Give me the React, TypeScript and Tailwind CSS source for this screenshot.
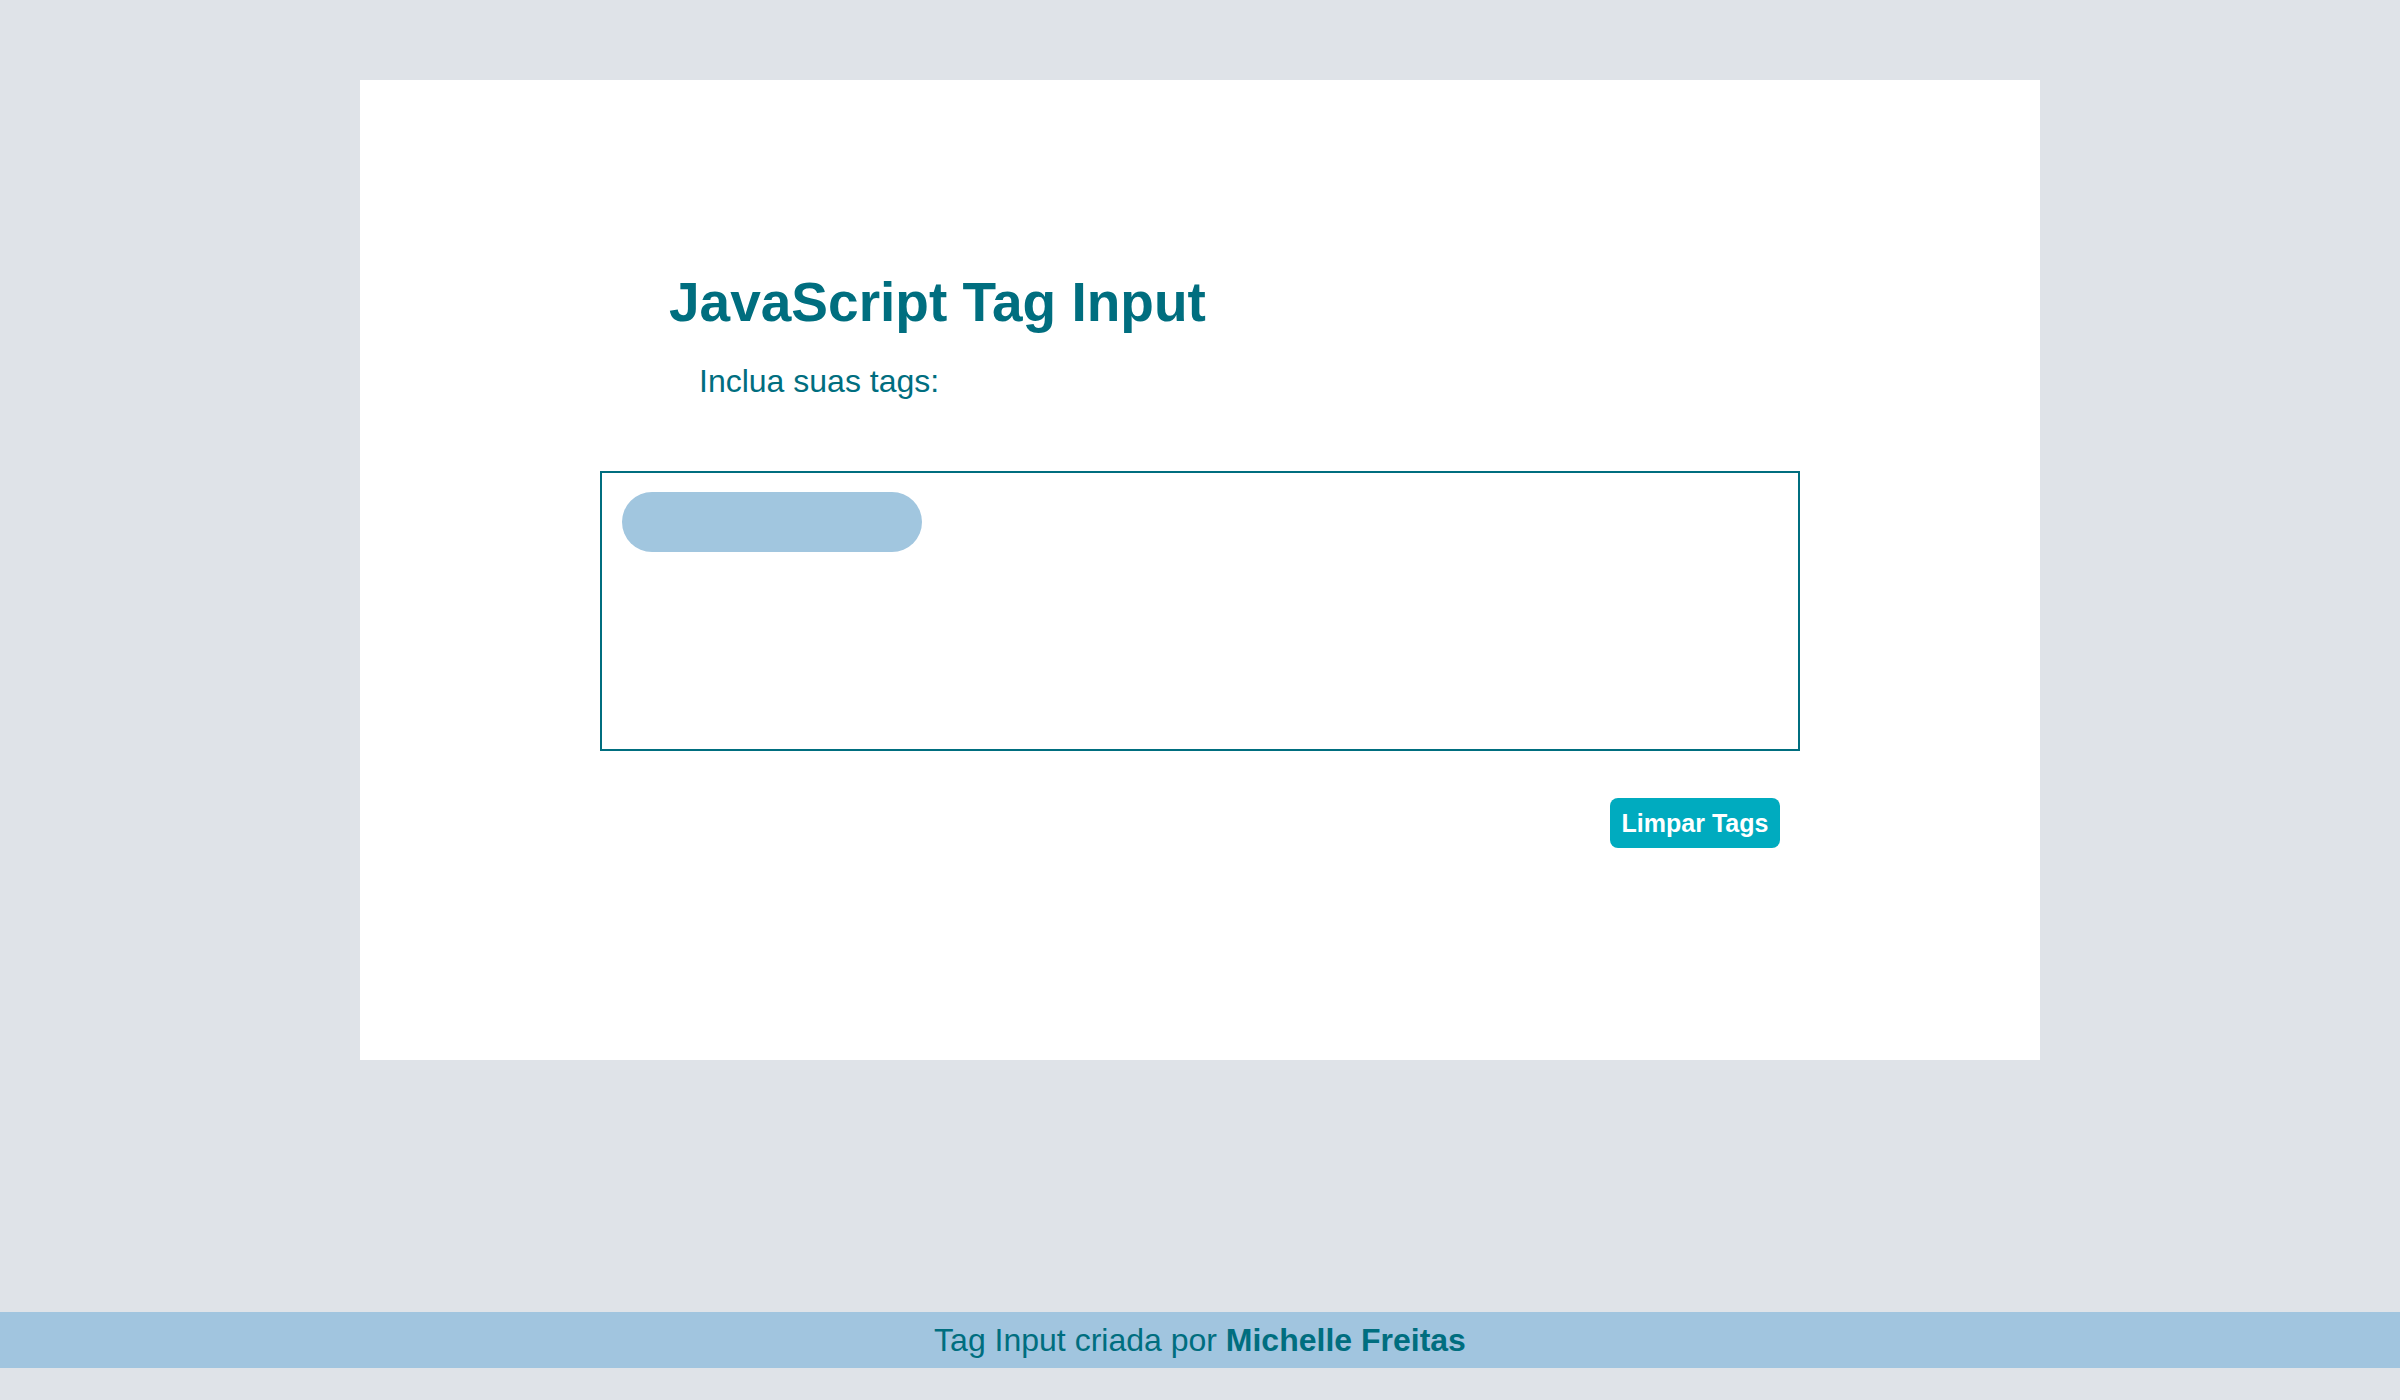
import { useState } from 'react';

const TEAL = 'text-[#006e7f]';

export default function App() {
  const [tags, setTags] = useState<string[]>(['']);

  return (
    <div className="min-h-screen bg-[#dfe3e8] pt-[80px] pb-[32px] font-['Liberation_Sans',Arial,sans-serif]">
      <main className="mx-auto flex h-[980px] w-[1680px] flex-col bg-white">
        <h1 className={`ml-[309px] mt-[191px] text-[55px] font-bold leading-[62px] ${TEAL}`}>
          JavaScript Tag Input
        </h1>
        <p className={`ml-[339px] mt-[29px] text-[32px] leading-[38px] ${TEAL}`}>Inclua suas tags:</p>

        <div className="mx-auto mt-[71px] flex h-[280px] w-[1200px] flex-wrap content-start items-start gap-3 border-2 border-[#006e7f] p-[19px] pl-[20px]">
          {tags.map((t, i) => (
            <span
              key={i}
              className="flex h-[60px] w-[300px] items-center rounded-full bg-[#a1c6df] px-6 text-[24px] text-[#006e7f]"
            >
              {t}
            </span>
          ))}
        </div>

        <div className="mx-auto mt-[47px] flex w-[1200px] justify-end pr-[20px]">
          <button
            type="button"
            onClick={() => setTags([])}
            className="h-[50px] w-[170px] rounded-lg bg-[#00abbf] text-[25px] font-bold leading-none text-white"
          >
            Limpar Tags
          </button>
        </div>
      </main>

      <footer className={`mt-[252px] flex h-[56px] items-center justify-center bg-[#a1c5df] text-[32px] ${TEAL}`}>
        <span>
          Tag Input criada por <strong className="font-bold">Michelle Freitas</strong>
        </span>
      </footer>
    </div>
  );
}
